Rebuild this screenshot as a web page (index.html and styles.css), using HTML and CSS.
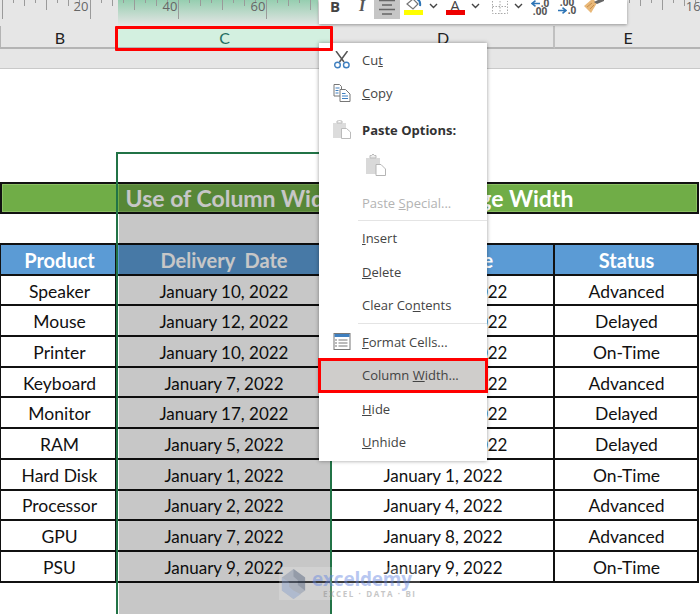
FILE: index.html
```html
<!DOCTYPE html>
<html lang="en">
<head>
<meta charset="utf-8">
<title>Column Width</title>
<link rel="stylesheet" href="styles.css">
</head>
<body>
<div class="page">
  <header class="chrome">
    <div class="ruler">
      <div class="ruler-sel"></div>
      <svg class="ruler-svg" width="700" height="26" viewBox="0 0 700 26">
        <defs>
          <pattern id="ticks" x="2" y="0" width="88" height="26" patternUnits="userSpaceOnUse">
            <path d="M0.5 0V19M11.5 0V3M22.5 0V6M33.5 0V3M44.5 0V10M55.5 0V3M66.5 0V6M77.5 0V3" stroke="#9a9a9a" fill="none"/>
          </pattern>
        </defs>
        <rect width="700" height="26" fill="url(#ticks)"/>
        <text x="81" y="11" class="ruler-num" text-anchor="middle">20</text>
        <text x="170" y="11" class="ruler-num" text-anchor="middle">40</text>
        <text x="258" y="11" class="ruler-num" text-anchor="middle">60</text>
        <text x="697" y="11" class="ruler-num" text-anchor="middle">160</text>
      </svg>
    </div>
    <div class="col-heads">
      <div class="col-head col-b">B</div>
      <div class="col-head col-c">C</div>
      <div class="col-head col-d">D</div>
      <div class="col-head col-e">E</div>
    </div>
    <div class="band"></div>
  </header>

  <main class="sheet">
    <div class="title-row">Use of Column Width Tool to Change Width</div>
    <div class="blank-row"></div>
    <div class="table">
      <div class="cell head">Product</div><div class="cell head">Delivery&nbsp; Date</div><div class="cell head">Order Date</div><div class="cell head">Status</div>
      <div class="cell">Speaker</div><div class="cell">January 10, 2022</div><div class="cell">January 10, 2022</div><div class="cell">Advanced</div>
      <div class="cell">Mouse</div><div class="cell">January 12, 2022</div><div class="cell">January 12, 2022</div><div class="cell">Delayed</div>
      <div class="cell">Printer</div><div class="cell">January 10, 2022</div><div class="cell">January 10, 2022</div><div class="cell">On-Time</div>
      <div class="cell">Keyboard</div><div class="cell">January 7, 2022</div><div class="cell">January 10, 2022</div><div class="cell">Advanced</div>
      <div class="cell">Monitor</div><div class="cell">January 17, 2022</div><div class="cell">January 19, 2022</div><div class="cell">Delayed</div>
      <div class="cell">RAM</div><div class="cell">January 5, 2022</div><div class="cell">January 10, 2022</div><div class="cell">Delayed</div>
      <div class="cell">Hard Disk</div><div class="cell">January 1, 2022</div><div class="cell">January 1, 2022</div><div class="cell">On-Time</div>
      <div class="cell">Processor</div><div class="cell">January 2, 2022</div><div class="cell">January 4, 2022</div><div class="cell">Advanced</div>
      <div class="cell">GPU</div><div class="cell">January 7, 2022</div><div class="cell">January 8, 2022</div><div class="cell">Advanced</div>
      <div class="cell">PSU</div><div class="cell">January 9, 2022</div><div class="cell">January 9, 2022</div><div class="cell">On-Time</div>
    </div>
  </main>

  <div class="selection"><div class="active-cell"></div><div class="shade"></div></div>

  <div class="watermark">
    <svg class="wm-logo" width="29" height="32" viewBox="0 0 40 34" preserveAspectRatio="none">
      <path d="M20 1L36 10V24L20 33L4 24V10Z" fill="#7f8ea8" opacity=".75"/>
      <path d="M20 1L36 10V24L26 18V13L20 9Z" fill="#59667f" opacity=".7"/>
      <path d="M4 10L14 15V20L20 24L30 28L20 33L4 24Z" fill="#9fb4dc" opacity=".8"/>
    </svg>
    <div class="wm-text">
      <span class="wm-name">exceldemy</span>
      <span class="wm-tag">EXCEL · DATA · BI</span>
    </div>
  </div>

  <div class="mini-bar">
    <span class="mini-btn mini-b">B</span>
    <span class="mini-btn mini-i">I</span>
    <span class="mini-btn mini-active">
      <svg width="16" height="18" viewBox="0 0 16 18"><path d="M0 .5H16M3 5H13M0 9.500H16M3 14H13" stroke="#666" stroke-width="1.6"/></svg>
    </span>
    <span class="mini-btn mini-fill">
      <svg width="20" height="10" viewBox="0 0 20 10"><path d="M4 4L10 -1L15 4L10 9Z" fill="#fff" stroke="#777" stroke-width="1.2"/><path d="M14 -1Q18 1 17 6" stroke="#2e75b6" stroke-width="2" fill="none"/></svg>
      <i class="swatch swatch-yellow"></i>
    </span>
    <svg class="chev" width="9" height="6" viewBox="0 0 9 6"><path d="M1 1L4.5 4.5L8 1" stroke="#444" stroke-width="1.4" fill="none"/></svg>
    <span class="mini-btn mini-a">A<i class="swatch swatch-red"></i></span>
    <svg class="chev" width="9" height="6" viewBox="0 0 9 6"><path d="M1 1L4.5 4.5L8 1" stroke="#444" stroke-width="1.4" fill="none"/></svg>
    <span class="mini-btn mini-border">
      <svg width="16" height="13" viewBox="0 0 16 13"><path d="M.5 0V12.500H15.500V0M8 0V12.500M.5 5.500H15.500" stroke="#a8a8a8" stroke-dasharray="1.5 1.5" fill="none"/></svg>
    </span>
    <svg class="chev" width="9" height="6" viewBox="0 0 9 6"><path d="M1 1L4.5 4.5L8 1" stroke="#444" stroke-width="1.4" fill="none"/></svg>
    <span class="mini-btn mini-dec">
      <span class="dec-row"><svg width="9" height="7" viewBox="0 0 9 7"><path d="M9 3.500H2M4.500 .7L1 3.500L4.500 6.300" stroke="#2e75b6" stroke-width="1.6" fill="none"/></svg><span class="dec-text">.0</span></span>
      <span class="dec-text">.00</span>
    </span>
    <span class="mini-btn mini-inc">
      <span class="dec-text">.00</span>
      <span class="dec-row"><svg width="9" height="7" viewBox="0 0 9 7"><path d="M0 3.500H7M4.500 .7L8 3.500L4.500 6.300" stroke="#2e75b6" stroke-width="1.6" fill="none"/></svg><span class="dec-text">.0</span></span>
    </span>
    <span class="mini-btn mini-brush">
      <svg width="22" height="13" viewBox="0 0 22 13"><path d="M1 6L8 0H11L14 3L8 13Z" fill="#e9b878"/><path d="M4 7L9 3M7 9L11 5" stroke="#c98f4d"/><path d="M11 2L15 0H21V1L14 4Z" fill="#666"/></svg>
    </span>
  </div>

  <nav class="menu">
    <div class="item">
      <svg class="ico" width="17" height="18" viewBox="0 0 17 18"><path d="M2.5 0L10.5 11M14 0L6 11" stroke="#555" stroke-width="1.5" fill="none"/><circle cx="4" cy="14" r="2.8" fill="none" stroke="#3f7fbf" stroke-width="1.4"/><circle cx="12.8" cy="14" r="2.8" fill="none" stroke="#3f7fbf" stroke-width="1.4"/></svg>
      <span class="label">Cu<u>t</u></span>
    </div>
    <div class="item">
      <svg class="ico" width="17" height="18" viewBox="0 0 17 18"><path d="M.5 .5H6L8 2.5V12H.5Z" fill="#fff" stroke="#777"/><path d="M6.5 5.5H12L16.5 10V17.5H6.5Z" fill="#fff" stroke="#777"/><path d="M2 4H6M2 6.5H5M2 9H5M8.5 9.5H12M8.5 12H14.5M8.5 14.5H14.5" stroke="#3f7fbf"/></svg>
      <span class="label"><u>C</u>opy</span>
    </div>
    <div class="item item-paste">
      <svg class="ico" width="18" height="19" viewBox="0 0 18 19"><path d="M0 3H13V18H0Z" fill="#dcdcdc"/><path d="M4 3V1H5.5L6.5 0L7.5 1H9V3Z" fill="#fff" stroke="#bbb"/><path d="M8.5 8.5H13.5L17.5 12V18.5H8.5Z" fill="#fff" stroke="#bbb"/></svg>
      <span class="label strong">Paste Options:</span>
    </div>
    <div class="paste-slot">
      <svg width="20" height="22" viewBox="0 0 20 22"><path d="M0 4H14V20H0Z" fill="#d9d9d9"/><path d="M4 4V1.5H5.5L7 0L8.5 1.5H10V4Z" fill="#eee" stroke="#bbb"/><path d="M10 10.500H15L19.500 15V21.500H10Z" fill="#fff" stroke="#b5b5b5"/></svg>
    </div>
    <div class="item item-off">
      <span class="ico-gap"></span>
      <span class="label">Paste <u>S</u>pecial...</span>
    </div>
    <hr class="sep">
    <div class="item"><span class="ico-gap"></span><span class="label"><u>I</u>nsert</span></div>
    <div class="item"><span class="ico-gap"></span><span class="label"><u>D</u>elete</span></div>
    <div class="item"><span class="ico-gap"></span><span class="label">Clear Co<u>n</u>tents</span></div>
    <hr class="sep sep-low">
    <div class="item">
      <svg class="ico" width="17" height="17" viewBox="0 0 17 17"><rect x=".5" y=".5" width="16" height="16" fill="#fff" stroke="#777"/><rect x="1" y="1" width="15" height="3" fill="#3f7fbf"/><path d="M5 7H14M5 10H14M5 13H14" stroke="#777"/><path d="M2.500 6V8M2.500 9V11M2.500 12V14" stroke="#777"/></svg>
      <span class="label"><u>F</u>ormat Cells...</span>
    </div>
    <div class="item item-hot"><span class="ico-gap"></span><span class="label">Column <u>W</u>idth...</span></div>
    <div class="item"><span class="ico-gap"></span><span class="label"><u>H</u>ide</span></div>
    <div class="item"><span class="ico-gap"></span><span class="label"><u>U</u>nhide</span></div>
  </nav>

  <div class="col-frame"></div>
</div>
</body>
</html>
```

FILE: styles.css
```css
* { box-sizing: border-box; }
html, body { margin: 0; padding: 0; }
body { font-family: "Lato", "Liberation Sans", sans-serif; color: #111; background: #fff; }
.page { position: relative; width: 700px; height: 614px; overflow: hidden; }

/* Excel chrome */
.chrome { height: 69px; background: #e6e6e6; border-bottom: 1px solid #c9c9c9; }
.ruler { position: relative; height: 26px; }
.ruler-sel { position: absolute; left: 118px; top: 0; width: 200px; height: 26px; background: linear-gradient(#96ceb0, #e6e6e6); }
.ruler-svg { position: absolute; left: 0; top: 0; display: block; }
.ruler-num { font: 13px "Open Sans", sans-serif; fill: #666; }

.col-heads { display: grid; grid-template-columns: 117px 215px 223px 145px; height: 23px; }
.col-head { display: flex; align-items: center; justify-content: center; padding: 1px 0 0 1px; font: 16px "Lato", sans-serif; color: #222; border-bottom: 2px solid #b4b4b4; border-right: 1px solid #c4c4c4; }
.col-b { border-left: 1px solid #b4b4b4; padding-left: 3px; }
.col-c { background: #d3f0e0; color: #1f6f62; }
.col-d { border-right: 2px solid #c0c0c0; }
.col-e { border-right: 0; }
.col-frame { position: absolute; left: 115px; top: 26px; width: 218px; height: 25px; border: 3px solid #f00; border-radius: 1px; z-index: 2; }

/* Worksheet */
.sheet { padding: 113px 1px 0 0; }
.title-row { height: 32px; display: flex; align-items: center; justify-content: center; background: #70ad47; color: #fff; font-weight: 700; font-size: 23px; border: 2px solid #111; box-shadow: inset 0 0 0 1px #8cc063; }
.blank-row { height: 29px; }
.table { display: grid; grid-template-columns: 117px 215px 223px 144px; grid-auto-rows: 30.7px; border-top: 2px solid #111; }
.cell { display: flex; align-items: center; justify-content: center; padding: 2px 0 0 1px; font-size: 17.5px; border-bottom: 2px solid #111; border-right: 2px solid #111; }
.cell:nth-child(4n+1) { border-left: 1px solid #111; padding-left: 3px; }
.cell:nth-child(4n+2), .cell:nth-child(4n+3) { font-size: 17px; }
.head, .cell.head { background: #5b9bd5; color: #fff; font-weight: 700; font-size: 20px; padding-top: 1px; }

/* Column selection drawn over the sheet */
.selection { position: absolute; left: 116px; top: 152px; width: 216px; height: 462px; border: solid #217346; border-width: 2px 2px 0; display: flex; flex-direction: column; }
.active-cell { height: 29px; }
.shade { flex: 1; margin-left: 1px; background: rgba(0, 0, 0, .22); }

/* Watermark */
.watermark { position: absolute; left: 279px; top: 567px; width: 141px; height: 33px; display: flex; align-items: center; gap: 4px; opacity: .55; background: rgba(255,255,255,.35); }
.wm-logo { flex: none; }
.wm-text { display: flex; flex-direction: column; line-height: 1; }
.wm-name { font: 700 19px/19px "Open Sans", sans-serif; color: #7f9be6; letter-spacing: -.2px; }
.wm-tag { font: 700 8px/9px "Open Sans", sans-serif; color: #999; letter-spacing: 1.6px; padding-left: 11px; white-space: nowrap; }

/* Mini toolbar */
.mini-bar { position: absolute; left: 319px; top: 0; width: 308px; height: 24px; background: #fff; box-shadow: 0 1px 3px rgba(0,0,0,.35); display: flex; align-items: flex-start; font-family: "Open Sans", sans-serif; padding-left: 9px; overflow: hidden; }
.mini-btn { display: flex; align-items: center; justify-content: center; position: relative; height: 12px; flex: none; }
.mini-b { width: 14px; font-weight: 700; font-size: 15px; color: #444; }
.mini-i { width: 14px; margin-left: 13px; font: italic 700 16px "Liberation Serif", serif; color: #555; }
.mini-active { width: 26px; height: 19px; margin-left: 5px; background: #c6c6c6; align-items: flex-start; }
.mini-fill { width: 20px; margin-left: 3px; flex-direction: column; justify-content: flex-start; height: 15px; }
.swatch { display: block; position: absolute; height: 5px; width: 19px; top: 10px; left: 1px; }
.swatch-yellow { background: #ff0; }
.swatch-red { background: #e00; }
.chev { flex: none; margin: 3px 0 0 6px; }
.mini-a { width: 20px; margin-left: 7px; font-size: 15px; color: #444; height: 15px; align-items: flex-start; line-height: 10px; }
.mini-border { width: 16px; margin-left: 12px; height: 14px; }
.mini-dec { width: 16px; margin-left: 9px; flex-direction: column; height: 16px; margin-top: -1px; }
.mini-inc { width: 16px; margin-left: 11px; flex-direction: column; height: 16px; margin-top: -2px; }
.dec-text { font: 700 10px/8px "Open Sans", sans-serif; color: #555; text-align: center; }
.dec-row { display: flex; align-items: center; gap: 1px; }
.mini-brush { width: 22px; margin-left: 8px; height: 13px; }

/* Context menu */
.menu { position: absolute; left: 319px; top: 43px; width: 168px; height: 418px; background: #fff; box-shadow: 0 0 4px rgba(0,0,0,.4); font-family: "Open Sans", sans-serif; font-size: 13px; color: #444; }
.item { height: 33.5px; display: flex; align-items: center; padding-left: 14px; position: relative; }
.ico { flex: none; width: 18px; margin-right: 11px; }
.ico-gap { flex: none; width: 29px; }
.label { white-space: nowrap; }
.strong { font-weight: 700; color: #333; }
.item-paste { height: 39px; }
.paste-slot { height: 36.5px; padding: 5px 0 0 47px; display: flex; align-items: flex-start; }
.item-off { color: #b3b3b3; height: 34px; }
.sep { margin: 0 0 1px 39px; height: 1px; border: 0; background: #e4e4e4; }
.sep-low { margin: 1px 0 1px 39px; }
.item-hot { background: #cfcdcb; outline: 3px solid #f00; outline-offset: -2px; }
```
